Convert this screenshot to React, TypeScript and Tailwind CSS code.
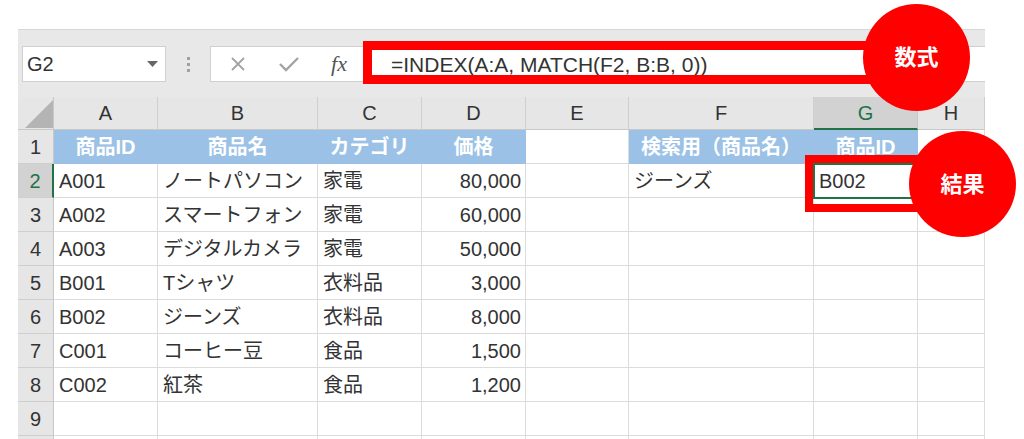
import React from "react";

type Col = { l: string; w: string; active?: boolean };
const cols: Col[] = [
  { l: "A", w: "w-[104px]" },
  { l: "B", w: "w-[160px]" },
  { l: "C", w: "w-[104px]" },
  { l: "D", w: "w-[104px]" },
  { l: "E", w: "w-[103px]" },
  { l: "F", w: "w-[185px]" },
  { l: "G", w: "w-[104px]", active: true },
  { l: "H", w: "w-[67px]" },
];

type Cell = { t?: string; align?: "l" | "r" | "c"; blue?: boolean };

const header: Cell[] = [
  { t: "商品ID", align: "c", blue: true },
  { t: "商品名", align: "c", blue: true },
  { t: "カテゴリ", align: "c", blue: true },
  { t: "価格", align: "c", blue: true },
  {},
  { t: "検索用（商品名）", align: "c", blue: true },
  { t: "商品ID", align: "c", blue: true },
  {},
];

const data: [string, string, string, string][] = [
  ["A001", "ノートパソコン", "家電", "80,000"],
  ["A002", "スマートフォン", "家電", "60,000"],
  ["A003", "デジタルカメラ", "家電", "50,000"],
  ["B001", "Tシャツ", "衣料品", "3,000"],
  ["B002", "ジーンズ", "衣料品", "8,000"],
  ["C001", "コーヒー豆", "食品", "1,500"],
  ["C002", "紅茶", "食品", "1,200"],
];

function buildRows(): Cell[][] {
  const rows: Cell[][] = [header];
  data.forEach((d, i) => {
    const r: Cell[] = [
      { t: d[0] },
      { t: d[1] },
      { t: d[2] },
      { t: d[3], align: "r" },
      {},
      i === 0 ? { t: "ジーンズ" } : {},
      i === 0 ? { t: "B002" } : {},
      {},
    ];
    rows.push(r);
  });
  rows.push([{}, {}, {}, {}, {}, {}, {}, {}]);
  rows.push([{}, {}, {}, {}, {}, {}, {}, {}]);
  return rows;
}

const rows = buildRows();

function XIcon() {
  return (
    <svg width="18" height="18" viewBox="0 0 18 18">
      <path d="M3 3 L15 15 M15 3 L3 15" stroke="#a3a3a3" strokeWidth="1.8" fill="none" />
    </svg>
  );
}
function CheckIcon() {
  return (
    <svg width="22" height="18" viewBox="0 0 22 18">
      <path d="M2 9 L8 15 L20 3" stroke="#a3a3a3" strokeWidth="2.4" fill="none" />
    </svg>
  );
}

export default function App() {
  return (
    <div className="relative w-[1024px] h-[439px] overflow-hidden bg-white font-['Liberation_Sans','Noto_Sans_CJK_JP',sans-serif] text-[#333]">
      <div className="pt-[29px] pl-[18px]">
        <div className="w-[967px] flex flex-col">
          {/* toolbar */}
          <div className="h-[68px] bg-[#e8e8e8] border-t border-[#d6d6d6] flex items-start pt-[16px]">
            <div className="ml-[4px] w-[144px] h-[36px] bg-white border border-[#d0d0d0] flex items-center justify-between pl-[4px] pr-[7px]">
              <span className="text-[20px] leading-none">G2</span>
              <svg width="11" height="6" viewBox="0 0 11 6">
                <path d="M0 0 L11 0 L5.5 6 Z" fill="#666" />
              </svg>
            </div>
            <div className="w-[44px] h-[36px] flex flex-col items-center justify-center gap-[3px]">
              <div className="w-[3px] h-[3px] bg-[#a0a0a0]" />
              <div className="w-[3px] h-[3px] bg-[#a0a0a0]" />
              <div className="w-[3px] h-[3px] bg-[#a0a0a0]" />
            </div>
            <div className="flex-1 h-[36px] bg-white border-y border-l border-[#d0d0d0] flex items-center">
              <div className="w-[54px] flex justify-center">
                <XIcon />
              </div>
              <div className="w-[48px] flex justify-center">
                <CheckIcon />
              </div>
              <div className="w-[52px] flex justify-center">
                <span className="font-['Liberation_Serif',serif] italic text-[22px] text-[#555] leading-none">fx</span>
              </div>
              <div className="pl-[26px] text-[21px] leading-none whitespace-nowrap">=INDEX(A:A, MATCH(F2, B:B, 0))</div>
            </div>
          </div>

          {/* column headers */}
          <div className="flex h-[33px]">
            <div className="w-[36px] h-[33px] bg-[#e6e6e6] border-r border-b border-[#c8c8c8] relative">
              <svg className="absolute left-[7px] top-[3px]" width="28" height="28" viewBox="0 0 28 28">
                <path d="M28 0 L28 28 L0 28 Z" fill="#b4b4b4" />
              </svg>
            </div>
            {cols.map((c) => (
              <div
                key={c.l}
                className={
                  c.w +
                  " h-[33px] flex items-center justify-center text-[20px] " +
                  (c.active
                    ? "bg-[#d2d2d2] text-[#217346] border-r border-r-[#c8c8c8] border-b-2 border-b-[#217346]"
                    : "bg-[#e6e6e6] text-[#333] border-r border-r-[#cfcfcf] border-b border-b-[#c8c8c8]")
                }
              >
                {c.l}
              </div>
            ))}
          </div>

          {/* rows */}
          {rows.map((r, ri) => {
            const activeRow = ri === 1;
            return (
              <div key={ri} className="flex h-[34px]">
                <div
                  className={
                    "w-[36px] h-[34px] flex items-center justify-center text-[20px] border-b border-b-[#cfcfcf] " +
                    (activeRow
                      ? "bg-[#d2d2d2] text-[#217346] border-r-2 border-r-[#217346]"
                      : "bg-[#e6e6e6] text-[#333] border-r border-r-[#c8c8c8]")
                  }
                >
                  {ri < 9 ? ri + 1 : ""}
                </div>
                {r.map((cell, ci) => (
                  <div
                    key={ci}
                    className={
                      cols[ci].w +
                      " h-[34px] flex items-center text-[20px] whitespace-nowrap overflow-hidden border-r border-b " +
                      (cell.blue
                        ? "bg-[#9bc2e6] border-[#9bc2e6] text-white font-bold "
                        : "bg-white border-[#dcdcdc] text-[#333] ") +
                      (cell.align === "r"
                        ? "justify-end pr-[4px]"
                        : cell.align === "c"
                        ? "justify-center"
                        : "justify-start pl-[5px]")
                    }
                  >
                    {cell.t}
                  </div>
                ))}
              </div>
            );
          })}
        </div>
      </div>

      {/* selection border on G2 */}
      <div className="absolute left-[813px] top-[163px] w-[106px] h-[36px] border-2 border-[#217346]" />

      {/* annotations */}
      <div className="absolute left-[363px] top-[41px] w-[540px] h-[43px] border-[9px] border-[#ff0000]" />
      <div className="absolute left-[805px] top-[155px] w-[125px] h-[57px] border-[8px] border-[#ff0000]" />
      <div className="absolute left-[863px] top-[4px] w-[107px] h-[107px] rounded-full bg-[#ff0000] flex items-center justify-center text-white font-bold text-[22px]">
        数式
      </div>
      <div className="absolute left-[909px] top-[131px] w-[107px] h-[106px] rounded-full bg-[#ff0000] flex items-center justify-center text-white font-bold text-[22px]">
        結果
      </div>
    </div>
  );
}
